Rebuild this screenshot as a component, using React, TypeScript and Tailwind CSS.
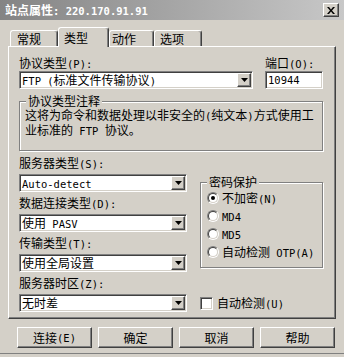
import React from 'react'

const raised =
  'border border-t-white border-l-white border-r-[#404040] border-b-[#404040] shadow-[inset_-1px_-1px_0_#808080]'
const sunken =
  'border border-t-[#808080] border-l-[#808080] border-r-white border-b-white shadow-[inset_1px_1px_0_#404040,inset_-1px_-1px_0_#d4d0c8]'
const etched = 'border border-[#808080] shadow-[inset_1px_1px_0_white,1px_1px_0_white]'

// latin runs in the half-width mono face, the rest in the CJK face
function T({ s }: { s: string }) {
  const parts = s.split(/([\x20-\x7e]+)/).filter(Boolean)
  return (
    <>
      {parts.map((p, i) =>
        /^[\x20-\x7e]+$/.test(p) ? (
          <span key={i} className="font-['DejaVu_Sans_Mono',monospace] text-[10.5px]">
            {p}
          </span>
        ) : (
          <span key={i}>{p}</span>
        )
      )}
    </>
  )
}

function Arrow() {
  return (
    <svg width="7" height="4" viewBox="0 0 7 4">
      <path d="M0 0h7L3.5 4z" fill="black" />
    </svg>
  )
}

function Select({ value, className }: { value: string; className: string }) {
  return (
    <div className={`${sunken} flex h-[18px] items-center bg-white p-px ${className}`}>
      <div className="flex-1 whitespace-nowrap pl-px leading-[14px]">
        <T s={value} />
      </div>
      <div className={`${raised} flex h-[14px] w-[14px] items-center justify-center bg-[#d4d0c8]`}>
        <Arrow />
      </div>
    </div>
  )
}

function Label({ text }: { text: string }) {
  return (
    <div className="h-[16px] whitespace-nowrap leading-[16px]">
      <T s={text} />
    </div>
  )
}

function Radio({ label, checked }: { label: string; checked?: boolean }) {
  return (
    <div className="flex h-[18px] items-center gap-[3px]">
      <div className="flex h-[12px] w-[12px] items-center justify-center rounded-full border border-t-[#808080] border-l-[#808080] border-r-white border-b-white">
        <div className="flex h-[10px] w-[10px] items-center justify-center rounded-full border border-t-[#404040] border-l-[#404040] border-r-[#d4d0c8] border-b-[#d4d0c8] bg-white">
          {checked && <div className="h-[4px] w-[4px] rounded-full bg-black" />}
        </div>
      </div>
      <span className="whitespace-nowrap leading-[16px]">
        <T s={label} />
      </span>
    </div>
  )
}

function Tab({ label, className, active }: { label: string; className: string; active?: boolean }) {
  return (
    <div
      className={`rounded-t-[3px] border border-b-0 border-t-white border-l-white border-r-[#404040] bg-[#d4d0c8] leading-[16px] shadow-[inset_-1px_0_0_#808080] ${
        active ? 'relative z-10 -mb-px h-[20px] pt-[2px]' : 'h-[16px]'
      } ${className}`}
    >
      {label}
    </div>
  )
}

function Button({ label }: { label: string }) {
  return (
    <div className={`${raised} flex h-[21px] w-[75px] items-center justify-center bg-[#d4d0c8] leading-[16px]`}>
      <T s={label} />
    </div>
  )
}

export default function App() {
  return (
    <div className="h-[357px] w-[344px] overflow-hidden bg-[#d4d0c8] font-['Noto_Sans_CJK_SC',sans-serif] text-[12px] text-black">
      {/* Title bar (inactive) */}
      <div className="flex h-[20px] items-center justify-between bg-gradient-to-r from-[#848484] to-[#c8c8c8] pl-[5px] pr-[5px]">
        <span className="whitespace-nowrap font-bold leading-[16px] text-white">
          站点属性<T s=": 220.170.91.91" />
        </span>
        <div className={`${raised} flex h-[14px] w-[16px] items-center justify-center bg-[#d4d0c8]`}>
          <svg width="8" height="7" viewBox="0 0 8 7">
            <path d="M0 0h2l2 2.5L6 0h2L5 3.5 8 7H6L4 4.5 2 7H0l3-3.5z" fill="black" />
          </svg>
        </div>
      </div>

      {/* Tabs */}
      <div className="mt-[7px] flex h-[19px] items-end pl-[10px]">
        <Tab label="常规" className="w-[48px] pl-[6px]" />
        <Tab label="类型" className="w-[51px] pl-[5px]" active />
        <Tab label="动作" className="w-[45px] pl-[2px]" />
        <Tab label="选项" className="w-[48px] pl-[5px]" />
      </div>

      {/* Tab page */}
      <div className={`ml-[8px] h-[273px] w-[328px] ${raised} pl-[10px] pt-[8px]`}>
        <div className="flex">
          <div className="w-[234px]">
            <Label text="协议类型(P):" />
            <Select value="FTP (标准文件传输协议)" className="w-[234px]" />
          </div>
          <div className="ml-[12px] w-[58px]">
            <Label text="端口(O):" />
            <div className={`${sunken} flex h-[18px] items-center bg-white pl-[2px] leading-[14px]`}>
              <T s="10944" />
            </div>
          </div>
        </div>

        <div className={`relative mt-[12px] h-[50px] w-[304px] ${etched} pl-[5px] pt-[6px]`}>
          <div className="absolute -top-[8px] left-[6px] bg-[#d4d0c8] px-[2px] leading-[14px]">协议类型注释</div>
          <div className="leading-[14px]">
            这将为命令和数据处理以非安全的<T s="(" />纯文本<T s=")" />方式使用工
            <br />
            业标准的<T s=" FTP " />协议。
          </div>
        </div>

        <div className="flex">
          <div className="w-[168px] pt-[4px]">
            <Label text="服务器类型(S):" />
            <Select value="Auto-detect" className="mt-[3px] w-[168px]" />
            <div className="mt-[3px]">
              <Label text="数据连接类型(D):" />
            </div>
            <Select value="使用 PASV" className="mt-[3px] w-[168px]" />
            <div className="mt-[3px]">
              <Label text="传输类型(T):" />
            </div>
            <Select value="使用全局设置" className="mt-[3px] w-[168px]" />
            <div className="mt-[3px]">
              <Label text="服务器时区(Z):" />
            </div>
            <Select value="无时差" className="mt-[3px] w-[168px]" />
          </div>

          <div className="ml-[13px] w-[123px]">
            <div className={`relative mt-[31px] h-[86px] ${etched} pl-[6px] pt-[6px]`}>
              <div className="absolute -top-[8px] left-[6px] bg-[#d4d0c8] px-[2px] leading-[14px]">密码保护</div>
              <Radio label="不加密(N)" checked />
              <Radio label="MD4" />
              <Radio label="MD5" />
              <Radio label="自动检测 OTP(A)" />
            </div>
            <div className="mt-[26px] flex h-[18px] items-center gap-[4px]">
              <div className={`${sunken} h-[13px] w-[13px] bg-white`} />
              <span className="leading-[16px]">
                <T s="自动检测(U)" />
              </span>
            </div>
          </div>
        </div>
      </div>

      {/* Buttons */}
      <div className="mt-[8px] flex gap-[6px] pl-[17px]">
        <Button label="连接(E)" />
        <Button label="确定" />
        <Button label="取消" />
        <Button label="帮助" />
      </div>
      <div className="mt-[5px] h-px w-full bg-[#808080]" />
    </div>
  )
}
